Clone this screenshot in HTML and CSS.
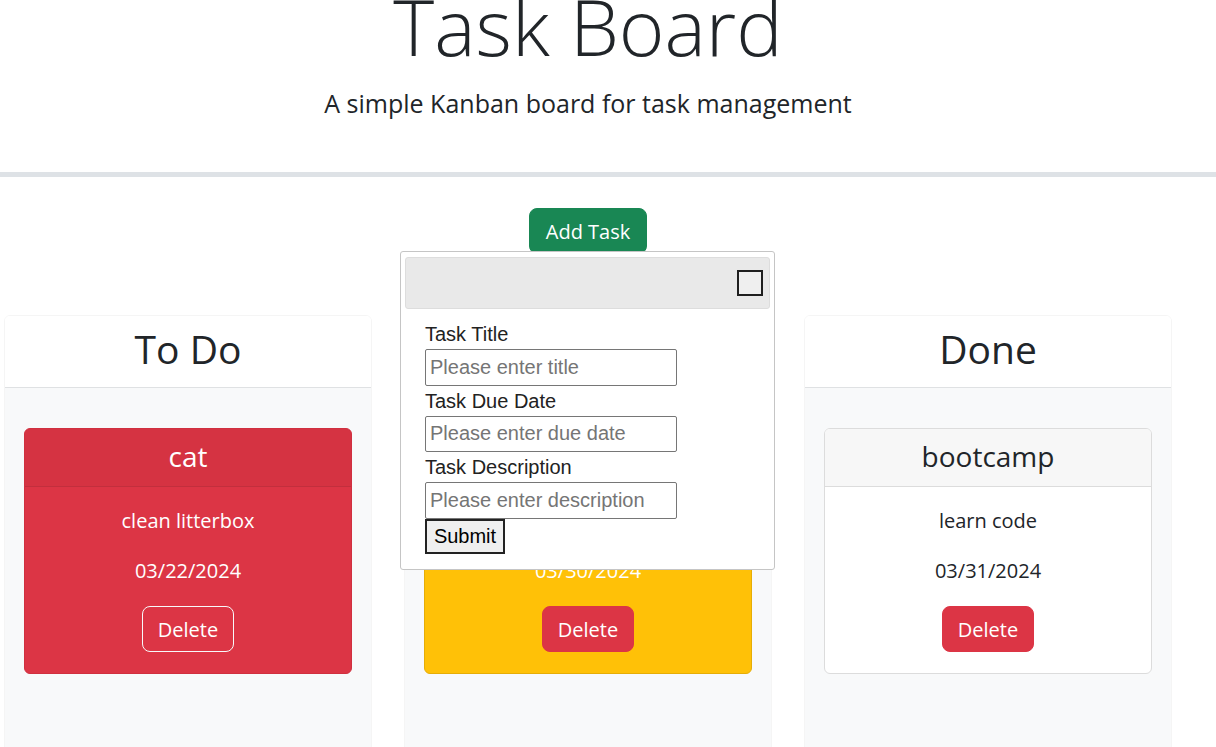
FILE: index.html
```html
<!DOCTYPE html>
<html lang="en">
<head>
<meta charset="utf-8">
<title>Task Board</title>
<link rel="stylesheet" href="styles.css">
</head>
<body>
<header class="site-header">
  <div class="header-inner">
    <h1 class="title">Task Board</h1>
    <p class="subtitle">A simple Kanban board for task management</p>
  </div>
</header>

<main class="board">
  <div class="add-row">
    <button class="btn btn-lg btn-success" type="button">Add Task</button>
  </div>

  <div class="lanes">
    <section class="lane">
      <div class="lane-header"><h2>To Do</h2></div>
      <div class="lane-body">
        <article class="task task-danger">
          <div class="task-header"><h3>cat</h3></div>
          <div class="task-body">
            <p>clean litterbox</p>
            <p>03/22/2024</p>
            <div class="task-actions"><button class="btn btn-lg btn-danger btn-outlined" type="button">Delete</button></div>
          </div>
        </article>
      </div>
    </section>

    <section class="lane">
      <div class="lane-header"><h2>In Progress</h2></div>
      <div class="lane-body">
        <article class="task task-warning">
          <div class="task-header"><h3>laundry</h3></div>
          <div class="task-body">
            <p>fold clothes</p>
            <p>03/30/2024</p>
            <div class="task-actions"><button class="btn btn-lg btn-danger" type="button">Delete</button></div>
          </div>
        </article>
      </div>
    </section>

    <section class="lane">
      <div class="lane-header"><h2>Done</h2></div>
      <div class="lane-body">
        <article class="task task-plain">
          <div class="task-header"><h3>bootcamp</h3></div>
          <div class="task-body">
            <p>learn code</p>
            <p>03/31/2024</p>
            <div class="task-actions"><button class="btn btn-lg btn-danger" type="button">Delete</button></div>
          </div>
        </article>
      </div>
    </section>
  </div>
</main>

<div class="dialog" role="dialog">
  <div class="dialog-titlebar">
    <button class="dialog-close" type="button" aria-label="Close"></button>
  </div>
  <form class="dialog-content">
    <label for="title">Task Title</label>
    <input id="title" type="text" placeholder="Please enter title">
    <label for="due">Task Due Date</label>
    <input id="due" type="text" placeholder="Please enter due date">
    <label for="desc">Task Description</label>
    <input id="desc" type="text" placeholder="Please enter description">
    <div><button class="submit" type="button">Submit</button></div>
  </form>
</div>
</body>
</html>
```

FILE: styles.css
```css
* { box-sizing: border-box; }

html, body {
  margin: 0;
  overflow: hidden;
}

body {
  font-family: "Open Sans", "Liberation Sans", sans-serif;
  font-size: 16px;
  line-height: 1.5;
  color: #212529;
  background: #fff;
}

/* header */
.site-header {
  padding-bottom: 51px;
  border-bottom: 5px solid #dee2e6;
}

.header-inner {
  width: 1176px;
  text-align: center;
}

.title {
  margin: -22px 0 11px;
  font-size: 78px;
  font-weight: 300;
  line-height: 96px;
  color: #212529;
}

.subtitle {
  margin: 0;
  font-size: 25px;
  font-weight: 400;
  line-height: 36px;
}

/* board */
.board {
  width: 1168px;
  margin-left: 4px;
}

.add-row {
  display: flex;
  justify-content: center;
  padding-top: 31px;
}

.btn {
  font-family: "Open Sans", "Liberation Sans", sans-serif;
  border: 1px solid transparent;
  color: #fff;
  cursor: pointer;
}

.btn-lg {
  font-size: 20px;
  line-height: 30px;
  padding: 8px 16px 6px;
  border-radius: 8px;
}

.btn-success {
  background: #198754;
  border-color: #198754;
}

.btn-danger {
  background: #dc3545;
  border-color: #dc3545;
  padding-left: 15px;
  padding-right: 15px;
}

.btn-outlined {
  border-color: #f8f9fa;
}

.lanes {
  display: grid;
  grid-template-columns: repeat(3, 368px);
  column-gap: 32px;
  margin-top: 61px;
}

.lane {
  border: 1px solid rgba(0, 0, 0, 0.04);
  border-radius: 6px;
  overflow: hidden;
}

.lane-header {
  background: #fff;
  padding: 9px 16px 14px;
  border-bottom: 1px solid #dfe1e3;
  text-align: center;
}

.lane-header h2 {
  margin: 0;
  font-size: 39px;
  font-weight: 400;
  line-height: 48px;
}

.lane-body {
  background: #f8f9fa;
  padding: 40px 19px;
  min-height: 420px;
}

/* task cards */
.task {
  border: 1px solid rgba(0, 0, 0, 0.175);
  border-radius: 6px;
  text-align: center;
  overflow: hidden;
}

.task-header {
  padding: 11px 16px 7px;
  background: rgba(0, 0, 0, 0.03);
  border-bottom: 1px solid rgba(0, 0, 0, 0.175);
}

.task-header h3 {
  margin: 0 0 5px;
  font-size: 28px;
  font-weight: 400;
  line-height: 33.6px;
}

.task-body {
  padding: 17px 16px 21px;
}

.task-body p {
  margin: 0 0 16px;
  font-size: 20px;
  line-height: 34px;
}

.task-actions {
  padding-top: 2px;
}

.task-danger {
  background: #dc3545;
  color: #fff;
  border-color: #d0303f;
}

.task-danger .task-header {
  border-bottom-color: #c22f3d;
}

.task-warning {
  background: #ffc107;
  color: #fff;
  border-color: #e6ad06;
}

.task-plain {
  background: #fff;
  color: #212529;
  border-color: #dcdcdc;
}

.task-plain .task-header {
  background: #f7f7f7;
  border-bottom-color: #dcdcdc;
}

/* dialog (overlay) */
.dialog {
  position: absolute;
  left: 400px;
  top: 251px;
  width: 375px;
  padding: 5px 4px 5px;
  background: #fff;
  border: 1px solid #c5c5c5;
  border-radius: 3px;
  font-family: "Liberation Sans", Arial, sans-serif;
  font-size: 20px;
  color: #222;
}

.dialog-titlebar {
  height: 52px;
  background: #e9e9e9;
  border: 1px solid #dddddd;
  border-radius: 3px;
  display: flex;
  align-items: center;
  justify-content: flex-end;
  padding-right: 6px;
}

.dialog-close {
  width: 26px;
  height: 26px;
  padding: 0;
  background: #efefef;
  border: 2px solid #1f1f1f;
  border-radius: 0;
}

.dialog-content {
  display: flex;
  flex-direction: column;
  align-items: flex-start;
  padding: 10px 20px;
}

.dialog-content label {
  display: block;
  line-height: 30px;
  color: #222;
}

.dialog-content input {
  width: 252px;
  height: 36.5px;
  padding: 0 4px;
  border: 1px solid #767676;
  border-radius: 2px;
  font-family: "Liberation Sans", Arial, sans-serif;
  font-size: 20px;
  color: #222;
}

.dialog-content input::placeholder {
  color: #757575;
}

.submit {
  width: 80px;
  height: 35px;
  padding: 0;
  background: #efefef;
  border: 2px solid #222;
  border-radius: 0;
  font-family: "Liberation Sans", Arial, sans-serif;
  font-size: 20px;
  color: #000;
}
```
